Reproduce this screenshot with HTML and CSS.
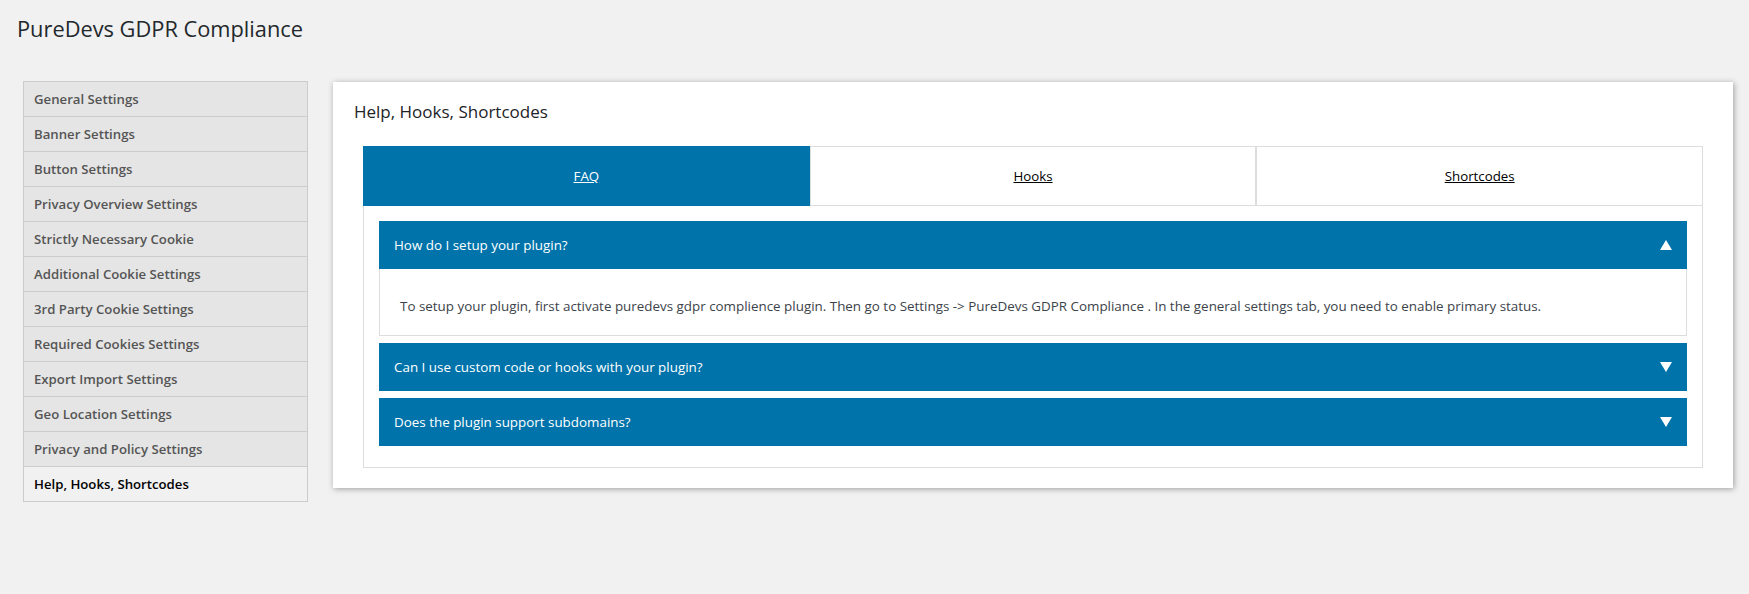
FILE: index.html
```html
<!DOCTYPE html>
<html lang="en">
<head>
<meta charset="utf-8">
<title>PureDevs GDPR Compliance</title>
<link rel="stylesheet" href="styles.css">
</head>
<body>
<div class="wrap">
  <h1 class="page-title">PureDevs GDPR Compliance</h1>
  <div class="layout">
    <ul class="side-nav">
      <li class="side-item">General Settings</li>
      <li class="side-item">Banner Settings</li>
      <li class="side-item">Button Settings</li>
      <li class="side-item">Privacy Overview Settings</li>
      <li class="side-item">Strictly Necessary Cookie</li>
      <li class="side-item">Additional Cookie Settings</li>
      <li class="side-item">3rd Party Cookie Settings</li>
      <li class="side-item">Required Cookies Settings</li>
      <li class="side-item">Export Import Settings</li>
      <li class="side-item">Geo Location Settings</li>
      <li class="side-item">Privacy and Policy Settings</li>
      <li class="side-item is-active">Help, Hooks, Shortcodes</li>
    </ul>
    <section class="panel">
      <h2 class="panel-title">Help, Hooks, Shortcodes</h2>
      <div class="tabs">
        <div class="tab-nav">
          <a class="tab is-active" href="#faq">FAQ</a>
          <a class="tab" href="#hooks">Hooks</a>
          <a class="tab" href="#shortcodes">Shortcodes</a>
        </div>
        <div class="tab-body">
          <div class="acc-item">
            <div class="acc-head">
              <span>How do I setup your plugin?</span>
              <span class="arrow arrow-up"></span>
            </div>
            <div class="acc-content">To setup your plugin, first activate puredevs gdpr complience plugin. Then go to Settings -&gt; PureDevs GDPR Compliance . In the general settings tab, you need to enable primary status.</div>
          </div>
          <div class="acc-item">
            <div class="acc-head">
              <span>Can I use custom code or hooks with your plugin?</span>
              <span class="arrow arrow-down"></span>
            </div>
          </div>
          <div class="acc-item">
            <div class="acc-head">
              <span>Does the plugin support subdomains?</span>
              <span class="arrow arrow-down"></span>
            </div>
          </div>
        </div>
      </div>
    </section>
  </div>
</div>
</body>
</html>
```
FILE: styles.css
```css
* { box-sizing: border-box; }
html, body {
  margin: 0;
  padding: 0;
  background: #f1f1f1;
}
body {
  font-family: "Open Sans", "Noto Sans", Arial, sans-serif;
  color: #3c434a;
  width: 1749px;
  height: 594px;
  overflow: hidden;
}
.wrap {
  padding: 0 16px 0 17px;
}
.page-title {
  margin: 14px 0 0 0;
  font-size: 21.8px;
  line-height: 30px;
  font-weight: 400;
  color: #23282d;
}
.layout {
  display: flex;
  align-items: flex-start;
  gap: 25px;
  margin-top: 37px;
  margin-left: 6px;
}
.side-nav {
  list-style: none;
  margin: 0;
  padding: 0;
  width: 285px;
  flex: 0 0 285px;
  border: 1px solid #cccccc;
}
.side-item {
  height: 35px;
  display: flex;
  align-items: center;
  padding-left: 10px;
  background: #e5e5e5;
  border-bottom: 1px solid #cccccc;
  font-size: 13.2px;
  font-weight: 600;
  color: #555555;
}
.side-item:last-child {
  border-bottom: none;
  height: 34px;
}
.side-item.is-active {
  background: #f1f1f1;
  color: #000000;
}
.panel {
  flex: 1;
  background: #ffffff;
  margin-top: 1px;
  padding: 18px 20px 20px 20px;
  box-shadow: 1px 1px 6px rgba(0, 0, 0, 0.35);
}
.panel-title {
  margin: 0 0 22px 1px;
  font-size: 17px;
  line-height: 24px;
  font-weight: 500;
  color: #1d2327;
}
.tabs {
  margin: 0 10px;
}
.tab-nav {
  display: flex;
}
.tab {
  flex: 1;
  height: 60px;
  display: flex;
  align-items: center;
  justify-content: center;
  border: 1px solid #dddddd;
  background: #ffffff;
  color: #000000;
  font-size: 13.3px;
  text-decoration: underline;
}
.tab.is-active {
  background: #0073aa;
  border-color: #0073aa;
  color: #ffffff;
}
.tab-body {
  border: 1px solid #dddddd;
  border-top: none;
  padding: 15px 15px 14px 15px;
}
.acc-item {
  margin-bottom: 7px;
}
.acc-head {
  height: 48px;
  display: flex;
  align-items: center;
  justify-content: space-between;
  padding: 0 15px 0 15px;
  background: #0073aa;
  color: #ffffff;
  font-size: 13.4px;
}
.arrow {
  width: 0;
  height: 0;
  border-left: 6.5px solid transparent;
  border-right: 6.5px solid transparent;
}
.arrow-up {
  border-bottom: 10px solid #ffffff;
}
.arrow-down {
  border-top: 10px solid #ffffff;
}
.acc-content {
  border: 1px solid #dddddd;
  border-top: none;
  padding: 27px 20px 19px 20px;
  font-size: 13.4px;
  line-height: 20px;
  color: #3c434a;
}
```
